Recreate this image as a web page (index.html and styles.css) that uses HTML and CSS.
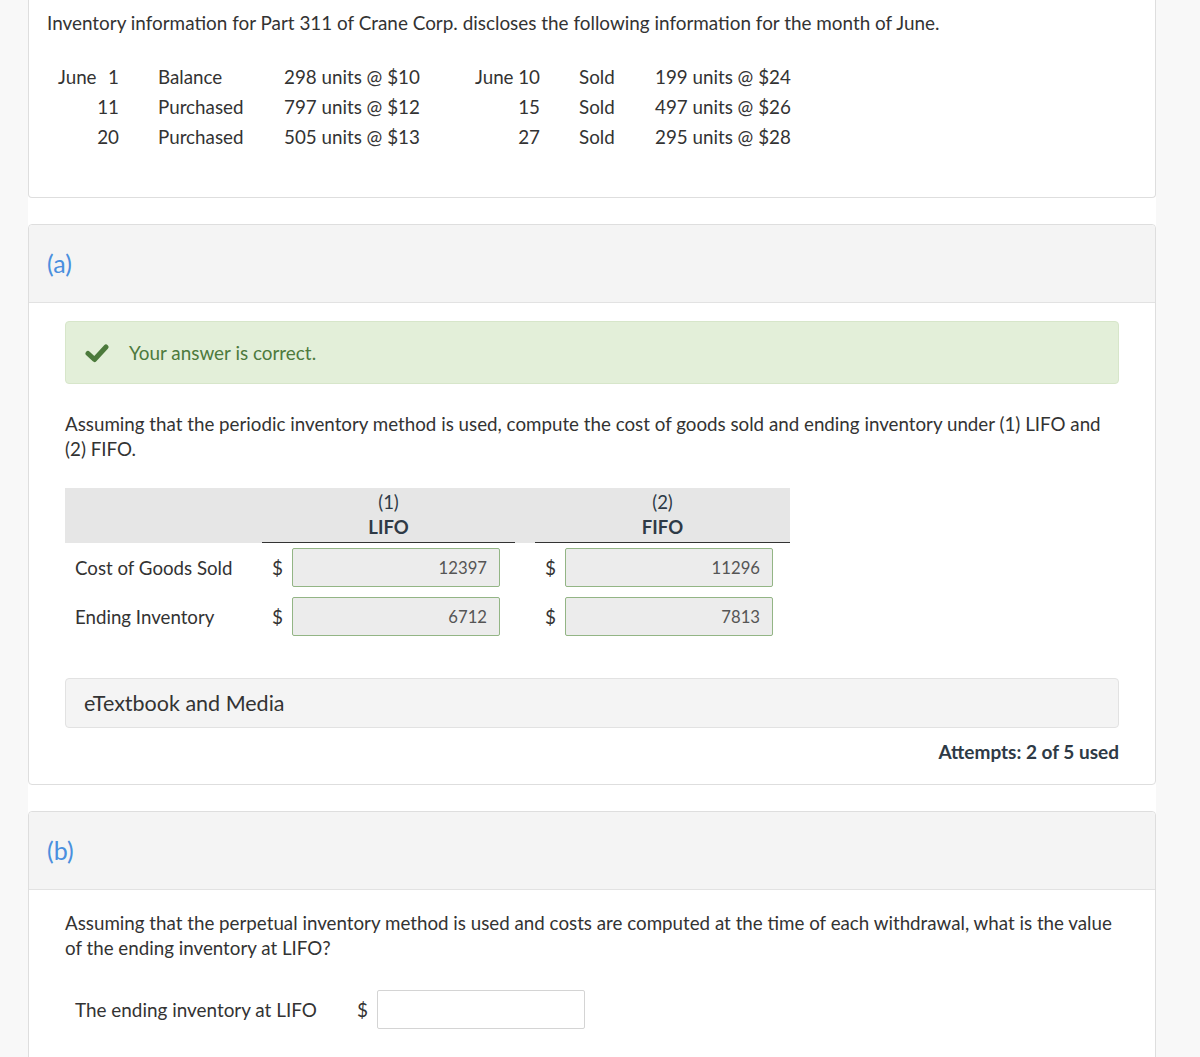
FILE: index.html
```html
<!DOCTYPE html>
<html lang="en">
<head>
    <meta charset="UTF-8">
    <meta name="viewport" content="width=device-width, initial-scale=1.0">
    <title>Inventory - Part 311</title>
    <link rel="stylesheet" href="styles.css">
</head>
<body>
    <div class="page">
        <div class="card card-intro">
            <p class="intro">Inventory information for Part 311 of Crane Corp. discloses the following information for the month of June.</p>
            <div class="stock">
                <div class="date"><span>June</span><span>1</span></div>
                <div class="kind">Balance</div>
                <div class="qty">298 units @ $10</div>
                <div class="date"><span>June</span><span>10</span></div>
                <div class="kind">Sold</div>
                <div class="qty">199 units @ $24</div>

                <div class="date"><span></span><span>11</span></div>
                <div class="kind">Purchased</div>
                <div class="qty">797 units @ $12</div>
                <div class="date"><span></span><span>15</span></div>
                <div class="kind">Sold</div>
                <div class="qty">497 units @ $26</div>

                <div class="date"><span></span><span>20</span></div>
                <div class="kind">Purchased</div>
                <div class="qty">505 units @ $13</div>
                <div class="date"><span></span><span>27</span></div>
                <div class="kind">Sold</div>
                <div class="qty">295 units @ $28</div>
            </div>
        </div>

        <div class="card">
            <div class="card-head">(a)</div>
            <div class="card-body">
                <div class="notice">
                    <svg class="check" width="24" height="20" viewBox="0 0 24 20">
                        <path d="M3 10.5 L9.5 16.5 L21 4" fill="none" stroke="#4c7a3c" stroke-width="5" stroke-linecap="round" stroke-linejoin="round"/>
                    </svg>
                    <span>Your answer is correct.</span>
                </div>

                <p class="question">Assuming that the periodic inventory method is used, compute the cost of goods sold and ending inventory under (1) LIFO and (2) FIFO.</p>

                <div class="answers">
                    <div class="answers-head">
                        <div></div>
                        <div class="col-title"><span>(1)</span><b>LIFO</b></div>
                        <div></div>
                        <div class="col-title"><span>(2)</span><b>FIFO</b></div>
                    </div>
                    <div class="answers-row">
                        <div class="row-label">Cost of Goods Sold</div>
                        <div class="cell"><span class="dollar">$</span><div class="field done">12397</div></div>
                        <div></div>
                        <div class="cell"><span class="dollar">$</span><div class="field done">11296</div></div>
                    </div>
                    <div class="answers-row">
                        <div class="row-label">Ending Inventory</div>
                        <div class="cell"><span class="dollar">$</span><div class="field done">6712</div></div>
                        <div></div>
                        <div class="cell"><span class="dollar">$</span><div class="field done">7813</div></div>
                    </div>
                </div>

                <div class="media">eTextbook and Media</div>
                <div class="attempts">Attempts: 2 of 5 used</div>
            </div>
        </div>

        <div class="card card-last">
            <div class="card-head">(b)</div>
            <div class="card-body">
                <p class="question question-b">Assuming that the perpetual inventory method is used and costs are computed at the time of each withdrawal, what is the value of the ending inventory at LIFO?</p>
                <div class="single">
                    <div class="single-label">The ending inventory at LIFO</div>
                    <span class="dollar">$</span>
                    <input class="field empty" type="text">
                </div>
            </div>
        </div>
    </div>
</body>
</html>
```

FILE: styles.css
```css
body {
    margin: 0;
    background-color: #f8f8f8;
    font-family: 'Lato', 'Open Sans', Arial, sans-serif;
    color: #333;
    overflow: hidden;
}
.page {
    width: 1128px;
    margin-left: 28px;
    background-color: #fff;
    min-height: 1057px;
}
.card {
    border: 1px solid #dedede;
    border-radius: 4px;
    margin-bottom: 26px;
    background-color: #fff;
}
.card-intro {
    border-top: none;
    border-radius: 0 0 4px 4px;
    padding: 10px 18px 45px;
}
.card-last {
    margin-bottom: 0;
}
.intro {
    margin: 0;
    font-size: 18.9px;
    line-height: 26px;
}
.stock {
    display: grid;
    grid-template-columns: 61px 165px 191px 65px 115px auto;
    margin: 26px 0 0 11px;
    font-size: 18.8px;
    line-height: 30px;
}
.date {
    display: flex;
    justify-content: space-between;
}
.kind {
    padding-left: 39px;
}
.card-head {
    height: 77px;
    display: flex;
    align-items: center;
    padding: 0 18px 2px;
    box-sizing: border-box;
    height: 78px;
    background-color: #f4f4f4;
    border-bottom: 1px solid #e2e2e2;
    border-radius: 4px 4px 0 0;
    color: #4a8fde;
    font-size: 25px;
}
.card-body {
    padding: 18px 36px 19px;
}
.card-last .card-body {
    padding-bottom: 60px;
}
.notice {
    display: flex;
    align-items: center;
    height: 63px;
    padding-left: 19px;
    background-color: #e3efd9;
    border: 1px solid #d7e6ca;
    border-radius: 4px;
    box-sizing: border-box;
    color: #4d7a3d;
    font-size: 18.9px;
}
.check {
    margin-right: 20px;
}
.question {
    margin: 27px 0 0;
    font-size: 18.75px;
    line-height: 25px;
}
.question-b {
    margin-top: 2px;
}
.answers {
    width: 725px;
    margin-top: 27px;
}
.answers-head,
.answers-row {
    display: grid;
    grid-template-columns: 197px 253px 20px 255px;
}
.answers-head {
    background-color: #e6e6e6;
    height: 55px;
}
.col-title {
    display: flex;
    flex-direction: column;
    align-items: center;
    justify-content: center;
    border-bottom: 1px solid #333;
    color: #2e3a46;
    font-size: 18.5px;
    line-height: 25px;
}
.col-title b {
    font-weight: 700;
}
.answers-row {
    margin-top: 5px;
    height: 39px;
    align-items: center;
}
.answers-row + .answers-row {
    margin-top: 10px;
}
.row-label {
    padding-left: 10px;
    font-size: 18.7px;
}
.cell {
    display: flex;
    align-items: center;
    padding-left: 10px;
}
.dollar {
    width: 20px;
    font-size: 18.9px;
}
.field {
    width: 208px;
    height: 39px;
    box-sizing: border-box;
    border-radius: 2px;
    font-family: inherit;
    font-size: 16.7px;
}
.field.done {
    display: flex;
    align-items: center;
    justify-content: flex-end;
    padding-right: 12px;
    background-color: #ececec;
    border: 1px solid #93b585;
    color: #555;
}
.field.empty {
    width: 208px;
    height: 39px;
    margin: 0;
    border: 1px solid #d4d4d4;
    background-color: #fff;
    outline: none;
}
.media {
    margin-top: 42px;
    height: 50px;
    display: flex;
    align-items: center;
    padding-left: 18px;
    background-color: #f4f4f4;
    border: 1px solid #e2e2e2;
    border-radius: 4px;
    box-sizing: border-box;
    font-size: 21.5px;
}
.attempts {
    margin-top: 11px;
    text-align: right;
    font-size: 19px;
    line-height: 26px;
    font-weight: 700;
    color: #2e3a46;
}
.single {
    display: flex;
    align-items: center;
    margin-top: 30px;
}
.single-label {
    width: 282px;
    padding-left: 10px;
    box-sizing: border-box;
    font-size: 18.9px;
}
.single .dollar {
    padding-left: 10px;
}
```
